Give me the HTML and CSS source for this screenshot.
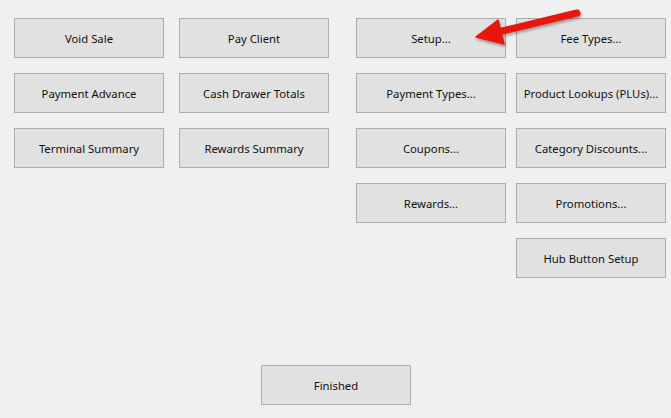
FILE: index.html
```html
<!DOCTYPE html>
<html>
<head>
<meta charset="utf-8">
<link rel="stylesheet" href="styles.css">
</head>
<body>
<div class="page">
  <div class="groups">
    <div class="grid left">
      <div class="btn">Void Sale</div>
      <div class="btn">Pay Client</div>
      <div class="btn">Payment Advance</div>
      <div class="btn">Cash Drawer Totals</div>
      <div class="btn">Terminal Summary</div>
      <div class="btn">Rewards Summary</div>
    </div>
    <div class="grid right">
      <div class="btn">Setup...</div>
      <div class="btn">Fee Types...</div>
      <div class="btn">Payment Types...</div>
      <div class="btn">Product Lookups (PLUs)...</div>
      <div class="btn">Coupons...</div>
      <div class="btn">Category Discounts...</div>
      <div class="btn">Rewards...</div>
      <div class="btn">Promotions...</div>
      <div class="spacer"></div>
      <div class="btn">Hub Button Setup</div>
    </div>
  </div>
  <div class="footer">
    <div class="btn">Finished</div>
  </div>
</div>
<svg class="arrow" width="671" height="418" viewBox="0 0 671 418">
  <defs>
    <filter id="sh" x="-20%" y="-50%" width="140%" height="200%">
      <feGaussianBlur in="SourceAlpha" stdDeviation="1.5"/>
      <feOffset dx="1" dy="2" result="b"/>
      <feComponentTransfer><feFuncA type="linear" slope="0.35"/></feComponentTransfer>
      <feMerge><feMergeNode/><feMergeNode in="SourceGraphic"/></feMerge>
    </filter>
  </defs>
  <g filter="url(#sh)">
    <line x1="577" y1="13" x2="494" y2="33" stroke="#e8150f" stroke-width="7" stroke-linecap="round"/>
    <polygon points="476,37 498,20 504,44" fill="#e8150f" stroke="#e8150f" stroke-width="1.5" stroke-linejoin="round"/>
  </g>
</svg>
</body>
</html>
```
FILE: styles.css
```css
html, body {
  margin: 0;
  padding: 0;
  background: #f0f0f0;
}
.page {
  width: 671px;
  height: 418px;
  box-sizing: border-box;
  padding-top: 18px;
  display: flex;
  flex-direction: column;
}
.groups {
  display: flex;
  padding-left: 14px;
  gap: 27px;
  height: 260px;
}
.grid {
  display: grid;
  grid-template-columns: 150px 150px;
  grid-auto-rows: 40px;
  row-gap: 15px;
  align-content: start;
}
.left { column-gap: 15px; }
.right { column-gap: 10px; }
.btn {
  box-sizing: border-box;
  width: 150px;
  height: 40px;
  padding-top: 1px;
  background: #e1e1e1;
  border: 1px solid #adadad;
  display: flex;
  align-items: center;
  justify-content: center;
  font-family: "Noto Sans", "Open Sans", sans-serif;
  font-size: 11.3px;
  color: #111;
  white-space: nowrap;
}
.footer {
  margin-top: 87px;
  display: flex;
  justify-content: center;
  padding-left: 1px;
}
.arrow {
  position: absolute;
  left: 0;
  top: 0;
  pointer-events: none;
}
```
